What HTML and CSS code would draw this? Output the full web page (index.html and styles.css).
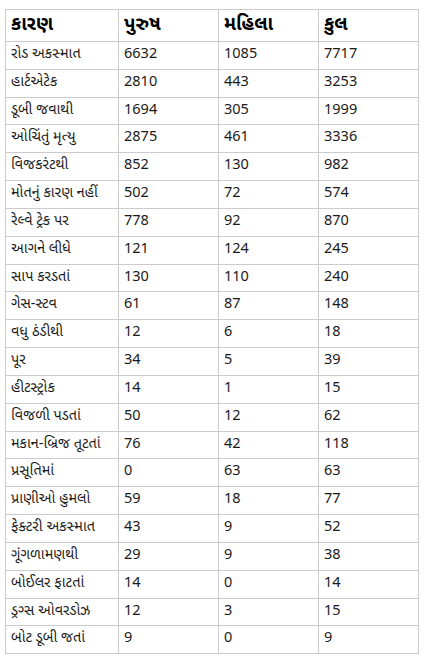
FILE: index.html
```html
<!DOCTYPE html>
<html>
<head>
<meta charset="utf-8">
<link rel="stylesheet" href="styles.css">
</head>
<body>
<table class="data">
<thead>
<tr><th class="c1">કારણ</th><th class="c2">પુરુષ</th><th class="c3">મહિલા</th><th class="c4">કુલ</th></tr>
</thead>
<tbody>
<tr><td>રોડ અકસ્માત</td><td>6632</td><td>1085</td><td>7717</td></tr>
<tr><td>હાર્ટએટેક</td><td>2810</td><td>443</td><td>3253</td></tr>
<tr><td>ડૂબી જવાથી</td><td>1694</td><td>305</td><td>1999</td></tr>
<tr><td>ઓચિંતું મૃત્યુ</td><td>2875</td><td>461</td><td>3336</td></tr>
<tr><td>વિજકરંટથી</td><td>852</td><td>130</td><td>982</td></tr>
<tr><td>મોતનું કારણ નહીં</td><td>502</td><td>72</td><td>574</td></tr>
<tr><td>રેલ્વે ટ્રેક પર</td><td>778</td><td>92</td><td>870</td></tr>
<tr><td>આગને લીધે</td><td>121</td><td>124</td><td>245</td></tr>
<tr><td>સાપ કરડતાં</td><td>130</td><td>110</td><td>240</td></tr>
<tr><td>ગેસ-સ્ટવ</td><td>61</td><td>87</td><td>148</td></tr>
<tr><td>વધુ ઠંડીથી</td><td>12</td><td>6</td><td>18</td></tr>
<tr><td>પૂર</td><td>34</td><td>5</td><td>39</td></tr>
<tr><td>હીટસ્ટ્રોક</td><td>14</td><td>1</td><td>15</td></tr>
<tr><td>વિજળી પડતાં</td><td>50</td><td>12</td><td>62</td></tr>
<tr><td>મકાન-બ્રિજ તૂટતાં</td><td>76</td><td>42</td><td>118</td></tr>
<tr><td>પ્રસૂતિમાં</td><td>0</td><td>63</td><td>63</td></tr>
<tr><td>પ્રાણીઓ હુમલો</td><td>59</td><td>18</td><td>77</td></tr>
<tr><td>ફેક્ટરી અકસ્માત</td><td>43</td><td>9</td><td>52</td></tr>
<tr><td>ગૂંગળામણથી</td><td>29</td><td>9</td><td>38</td></tr>
<tr><td>બોઈલર ફાટતાં</td><td>14</td><td>0</td><td>14</td></tr>
<tr><td>ડ્રગ્સ ઓવરડોઝ</td><td>12</td><td>3</td><td>15</td></tr>
<tr><td>બોટ ડૂબી જતાં</td><td>9</td><td>0</td><td>9</td></tr>
</tbody>
</table>
</body>
</html>
```
FILE: styles.css
```css
html, body {
  margin: 0;
  padding: 0;
  background: #ffffff;
}
body {
  padding: 9px 5px;
  font-family: "Noto Sans Gujarati", "Noto Sans", sans-serif;
  color: #1a1a1a;
}
.data {
  border-collapse: collapse;
  table-layout: fixed;
  width: 413px;
}
.data th, .data td {
  box-sizing: border-box;
  border: 1px solid #cccccc;
  text-align: left;
  padding: 4px 5px;
  vertical-align: middle;
  white-space: nowrap;
  overflow: hidden;
}
.data th {
  font-size: 19px;
  font-weight: 700;
  line-height: 23px;
  color: #000000;
}
.data td {
  font-size: 14.5px;
  line-height: 18.83px;
}
.c1 { width: 113px; }
.c2, .c3, .c4 { width: 100px; }
```
